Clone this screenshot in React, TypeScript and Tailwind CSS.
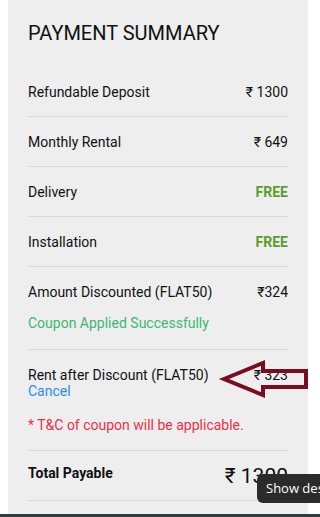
const Row = ({ label, value, green }: { label: string; value: string; green?: boolean }) => (
  <div className="flex items-center justify-between border-b border-[#d9d9d9] pt-[16px] pb-[15px] leading-[18px]">
    <span>{label}</span>
    <span className={green ? "font-bold text-[#5a9e2f]" : ""}>{value}</span>
  </div>
);

export default function App() {
  return (
    <div
      className="relative flex h-[517px] w-[320px] flex-col overflow-hidden bg-white text-[14px] text-[#111]"
      style={{ fontFamily: "Roboto, 'Noto Sans', sans-serif" }}
    >
      <div className="ml-2 flex w-[300px] flex-1 flex-col bg-[#eeeeee] px-5">
        <h2 className="pt-[20px] pb-[21px] text-[20px] leading-[26px] text-[#111]">PAYMENT SUMMARY</h2>
        <Row label="Refundable Deposit" value="₹ 1300" />
        <Row label="Monthly Rental" value="₹ 649" />
        <Row label="Delivery" value="FREE" green />
        <Row label="Installation" value="FREE" green />
        <div className="border-b border-[#d9d9d9] pt-[16px] pb-[17px] leading-[18px]">
          <div className="flex justify-between">
            <span>Amount Discounted (FLAT50)</span>
            <span>₹324</span>
          </div>
          <div className="mt-[13px] text-[#3cb86e]">Coupon Applied Successfully</div>
        </div>
        <div className="border-b border-[#d9d9d9] pt-[17px] pb-[16px] leading-[16px]">
          <div className="flex justify-between">
            <span>Rent after Discount (FLAT50)</span>
            <span>₹ 323</span>
          </div>
          <div className="text-[#2b8cf5]">Cancel</div>
          <div className="mt-[17px] leading-[18px] text-[#ee2f4a]">* T&amp;C of coupon will be applicable.</div>
        </div>
        <div className="flex items-center justify-between border-b border-[#d9d9d9] pt-[11px] pb-[10px]">
          <span className="-mt-[6px] font-bold leading-[18px]">Total Payable</span>
          <span className="text-[21px] leading-[28px]">₹ 1300</span>
        </div>
      </div>
      <div className="h-[3px] bg-[#2f3c3c]" />

      <svg className="absolute left-0 top-0" width="320" height="517" viewBox="0 0 320 517">
        <polygon
          points="224,379 263,363 263,371 306,371 306,387 263,387 263,395"
          fill="none"
          stroke="#7b0b1e"
          strokeWidth="4"
          strokeLinejoin="miter"
        />
      </svg>

      <div
        className="absolute left-[257px] top-[474px] flex h-[29px] w-[100px] items-center whitespace-nowrap rounded-md bg-[#2b2b2b] pl-[9px] text-[13px] text-white"
        style={{ fontFamily: "'Open Sans', sans-serif" }}
      >
        Show desktop
      </div>
    </div>
  );
}
